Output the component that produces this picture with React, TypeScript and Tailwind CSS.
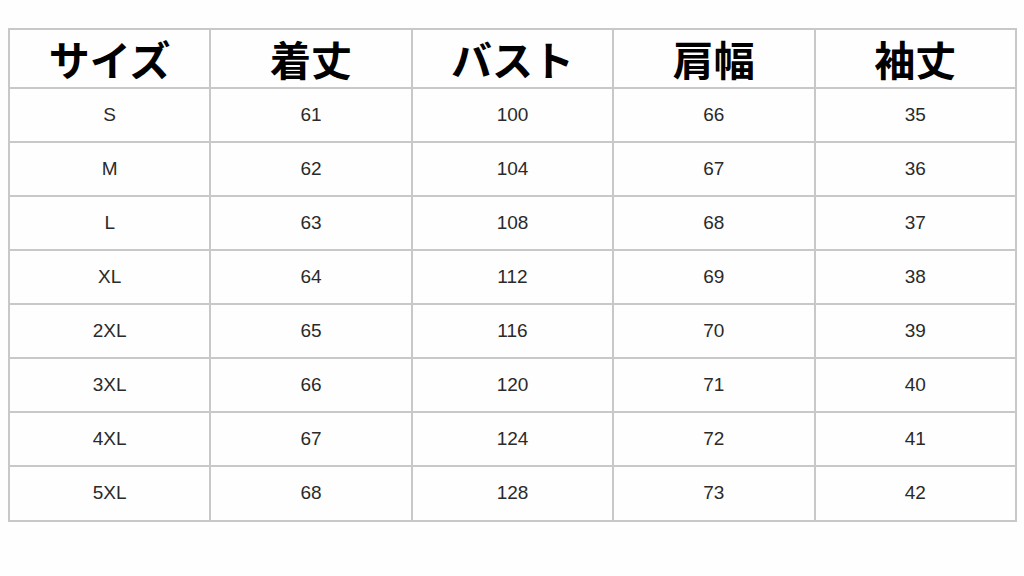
const headers = ["サイズ", "着丈", "バスト", "肩幅", "袖丈"];

const rows = [
  ["S", "61", "100", "66", "35"],
  ["M", "62", "104", "67", "36"],
  ["L", "63", "108", "68", "37"],
  ["XL", "64", "112", "69", "38"],
  ["2XL", "65", "116", "70", "39"],
  ["3XL", "66", "120", "71", "40"],
  ["4XL", "67", "124", "72", "41"],
  ["5XL", "68", "128", "73", "42"],
];

export default function App() {
  return (
    <div className="w-[1024px] h-[576px] bg-[#fefefe] pt-[28px] pl-[8px]">
      <table className="w-[1009px] table-fixed border-collapse border-2 border-[#c8c8c8]">
        <thead>
          <tr className="h-[59px]">
            {headers.map((h) => (
              <th
                key={h}
                className="border-2 border-[#c8c8c8] text-center align-middle text-[41px] font-bold leading-none text-black font-['Noto_Sans_CJK_JP',sans-serif]"
              >
                {h}
              </th>
            ))}
          </tr>
        </thead>
        <tbody>
          {rows.map((r, ri) => (
            <tr key={r[0]} className={ri === rows.length - 1 ? "h-[55px]" : "h-[54px]"}>
              {r.map((c, i) => (
                <td
                  key={i}
                  className="border-2 border-[#c8c8c8] text-center align-middle text-[19px] text-[#2a2a2a] font-['Liberation_Sans',Arial,sans-serif]"
                >
                  {c}
                </td>
              ))}
            </tr>
          ))}
        </tbody>
      </table>
    </div>
  );
}
